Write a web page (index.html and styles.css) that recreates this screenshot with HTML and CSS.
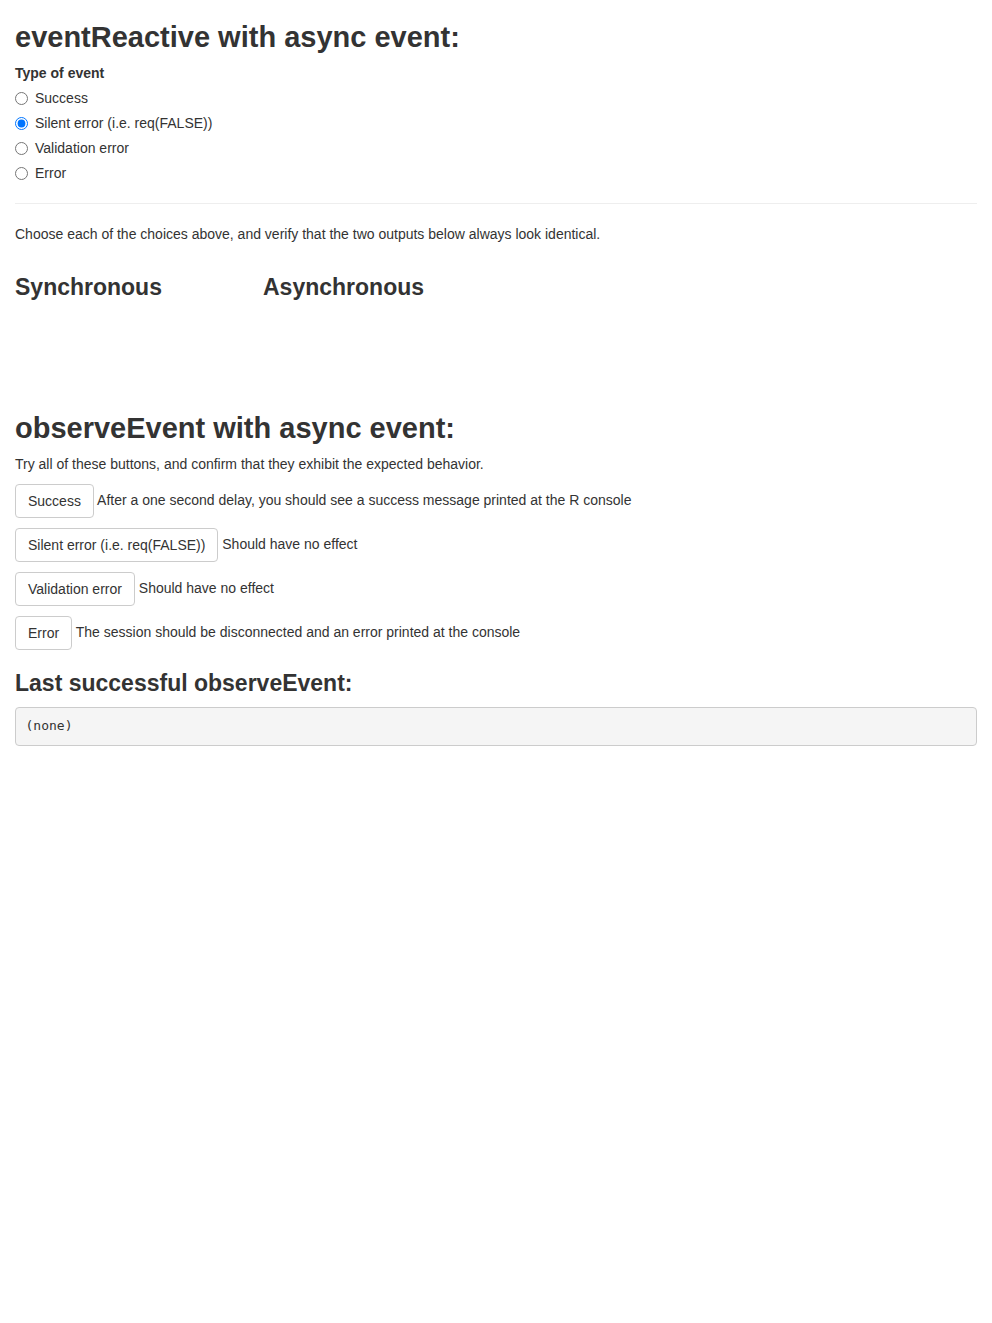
FILE: index.html
```html
<!DOCTYPE html>
<html>
<head>
<meta charset="utf-8">
<link rel="stylesheet" href="styles.css">
</head>
<body>
<div class="container-fluid">
  <h1>eventReactive with async event:</h1>
  <div class="form-group">
    <label class="control-label">Type of event</label>
    <div class="options-group">
      <div class="radio"><label><input type="radio" name="type" value="success"><span>Success</span></label></div>
      <div class="radio"><label><input type="radio" name="type" value="silent" checked><span>Silent error (i.e. req(FALSE))</span></label></div>
      <div class="radio"><label><input type="radio" name="type" value="validation"><span>Validation error</span></label></div>
      <div class="radio"><label><input type="radio" name="type" value="error"><span>Error</span></label></div>
    </div>
  </div>
  <hr>
  <p>Choose each of the choices above, and verify that the two outputs below always look identical.</p>
  <div class="row">
    <div class="col-3">
      <h3>Synchronous</h3>
      <div class="output-placeholder"></div>
    </div>
    <div class="col-3">
      <h3>Asynchronous</h3>
      <div class="output-placeholder"></div>
    </div>
  </div>
  <h1>observeEvent with async event:</h1>
  <p>Try all of these buttons, and confirm that they exhibit the expected behavior.</p>
  <p><button class="btn" type="button">Success</button> After a one second delay, you should see a success message printed at the R console</p>
  <p><button class="btn" type="button">Silent error (i.e. req(FALSE))</button> Should have no effect</p>
  <p><button class="btn" type="button">Validation error</button> Should have no effect</p>
  <p><button class="btn" type="button">Error</button> The session should be disconnected and an error printed at the console</p>
  <h3>Last successful observeEvent:</h3>
  <pre class="text-output">(none)</pre>
</div>
</body>
</html>
```
FILE: styles.css
```css
* { box-sizing: border-box; }
html, body { margin: 0; padding: 0; }
body {
  font-family: "Liberation Sans", Arial, sans-serif;
  font-size: 14px;
  line-height: 1.42857143;
  color: #333;
  background: #fff;
}
.container-fluid { padding: 0 15px; }
h1, h3 {
  font-family: "Liberation Sans", Arial, sans-serif;
  font-weight: 700;
  color: #333;
  margin-top: 20px;
  margin-bottom: 10px;
}
h1 {
  font-size: 29px;
  line-height: 35px;
  margin-bottom: 8px;
}
h3 {
  font-size: 23px;
  line-height: 26.4px;
}
p { margin: 0 0 10px; }
.form-group { margin-bottom: 15px; }
.control-label {
  display: inline-block;
  max-width: 100%;
  margin-bottom: 5px;
  font-weight: 700;
}
.radio {
  position: relative;
  display: block;
  margin: 0 0 5px;
}
.radio label {
  display: inline-block;
  min-height: 20px;
  padding-left: 20px;
  margin-bottom: 0;
  font-weight: 400;
  cursor: pointer;
}
.radio input[type=radio] {
  position: absolute;
  width: 13px;
  height: 13px;
  margin: 4px 0 0 -20px;
  line-height: normal;
}
hr {
  margin-top: 20px;
  margin-bottom: 20px;
  border: 0;
  border-top: 1px solid #eee;
}
.row {
  display: flex;
  margin-left: -15px;
  margin-right: -15px;
}
.col-3 {
  width: 25%;
  padding-left: 15px;
  padding-right: 15px;
}
.output-placeholder { height: 81px; }
.btn {
  display: inline-block;
  margin-bottom: 0;
  font-family: inherit;
  font-weight: 400;
  text-align: center;
  vertical-align: middle;
  cursor: pointer;
  background: #fff;
  border: 1px solid #ccc;
  padding: 6px 12px;
  font-size: 14px;
  line-height: 1.42857143;
  border-radius: 4px;
  color: #333;
}
pre.text-output {
  display: block;
  padding: 9.5px;
  margin: 0 0 10px;
  font-size: 13px;
  line-height: 1.42857143;
  word-break: break-all;
  word-wrap: break-word;
  color: #333;
  background-color: #f5f5f5;
  border: 1px solid #ccc;
  border-radius: 4px;
  font-family: "DejaVu Sans Mono", Menlo, monospace;
}
```
